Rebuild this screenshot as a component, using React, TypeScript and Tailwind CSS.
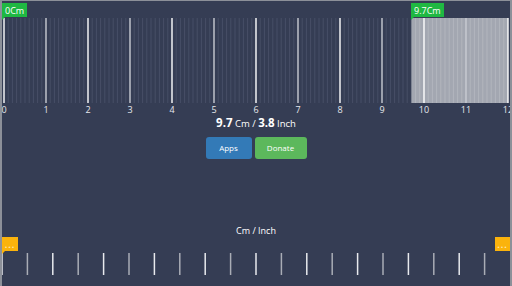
import React from 'react';

const CM_PX = 42;
const ORIGIN = 4;
const SELECTED_CM = 9.7;

function CmRuler() {
  const minor: number[] = [];
  for (let i = 0; i <= 120; i++) {
    if (i % 10 !== 0) minor.push(ORIGIN + (i * CM_PX) / 10);
  }
  const majors = Array.from({ length: 13 }, (_, i) => ORIGIN + i * CM_PX);
  const selX = ORIGIN + SELECTED_CM * CM_PX;

  return (
    <svg width="512" height="85" className="block">
      {minor.map((x, i) => (
        <line key={i} x1={x} x2={x} y1="0" y2="85" stroke="#474f66" strokeWidth="1" />
      ))}
      <rect x={selX} y="0" width={508 - selX} height="85" fill="#a3a7b1" />
      {minor
        .filter((x) => x > selX)
        .map((x, i) => (
          <line key={`s${i}`} x1={x} x2={x} y1="0" y2="85" stroke="#b2b5bd" strokeWidth="1" />
        ))}
      {majors.map((x, i) => (
        <line
          key={`m${i}`}
          x1={x}
          x2={x}
          y1="0"
          y2="85"
          stroke={i % 2 === 0 ? '#ffffff' : '#c9ccd3'}
          strokeWidth="1.4"
        />
      ))}
    </svg>
  );
}

function Flag({ label, className }: { label: string; className: string }) {
  return (
    <div className={`absolute top-[2px] ${className}`}>
      <div className="h-[14px] px-[3px] flex items-center text-[9px] leading-none text-white bg-[#1fb842]">
        {label}
      </div>
      <div className="w-[3px] h-[3px] bg-[#1fb842] [clip-path:polygon(0_0,100%_0,0_100%)]" />
    </div>
  );
}

export default function App() {
  const inchTicks = Array.from({ length: 20 }, (_, i) => 2 + i * 25.4);

  return (
    <div
      className="w-[512px] h-[286px] overflow-hidden bg-[#353d54] border-l-2 border-t border-r-2 border-[#8c9099] flex flex-col text-white"
      style={{ fontFamily: '"Open Sans", "DejaVu Sans", sans-serif' }}
    >
      {/* cm ruler */}
      <div className="relative h-[102px] pt-[17px] -ml-[2px]">
        <CmRuler />
        <Flag label="0Cm" className="left-[2px]" />
        <Flag label="9.7Cm" className="left-[411px]" />
      </div>

      <div className="relative h-[13px] -ml-[2px]">
        {Array.from({ length: 13 }, (_, i) => (
          <span
            key={i}
            className="absolute top-0 w-[20px] -ml-[10px] text-center text-[9px] leading-[13px] text-[#e6e8ec]"
            style={{ left: ORIGIN + i * CM_PX }}
          >
            {i}
          </span>
        ))}
      </div>

      <div className="flex justify-center items-baseline -mt-[1px] text-[9.5px] leading-[15px]">
        <span className="font-bold text-[11.5px]">9.7</span>
        <span>&nbsp;Cm /&nbsp;</span>
        <span className="font-bold text-[11.5px]">3.8</span>
        <span>&nbsp;Inch</span>
      </div>

      <div className="flex justify-center gap-[3px] mt-[6px]">
        <button className="w-[46px] h-[22px] rounded-[3px] bg-[#337ab7] text-[8px] text-white">Apps</button>
        <button className="w-[52px] h-[22px] rounded-[3px] bg-[#5cb85c] text-[8px] text-white">Donate</button>
      </div>

      <div className="mt-[66px] text-center text-[9px] leading-[12px]">Cm / Inch</div>

      {/* inch ruler */}
      <div className="relative mt-0 h-[40px] -ml-[2px]">
        <div className="absolute left-[2px] top-0 w-[16px] h-[14px] bg-[#fbb30c] flex items-end justify-center pb-[3px] text-[9px] font-bold leading-[6px] tracking-[1px] text-[#fde7b0]">
          ...
        </div>
        <div className="absolute left-[2px] top-[14px] w-[3px] h-[3px] bg-[#fbb30c] [clip-path:polygon(0_0,100%_0,0_100%)]" />
        <div className="absolute right-0 top-0 w-[15px] h-[14px] bg-[#fbb30c] flex items-end justify-center pb-[3px] text-[9px] font-bold leading-[6px] tracking-[1px] text-[#fde7b0]">
          ...
        </div>
        <svg width="512" height="40" className="block">
          {inchTicks.map((x, i) => (
            <line
              key={i}
              x1={x}
              x2={x}
              y1="16"
              y2="38"
              stroke={i % 2 === 0 ? '#e8eaee' : '#a9adb6'}
              strokeWidth="1.5"
            />
          ))}
        </svg>
      </div>
    </div>
  );
}
